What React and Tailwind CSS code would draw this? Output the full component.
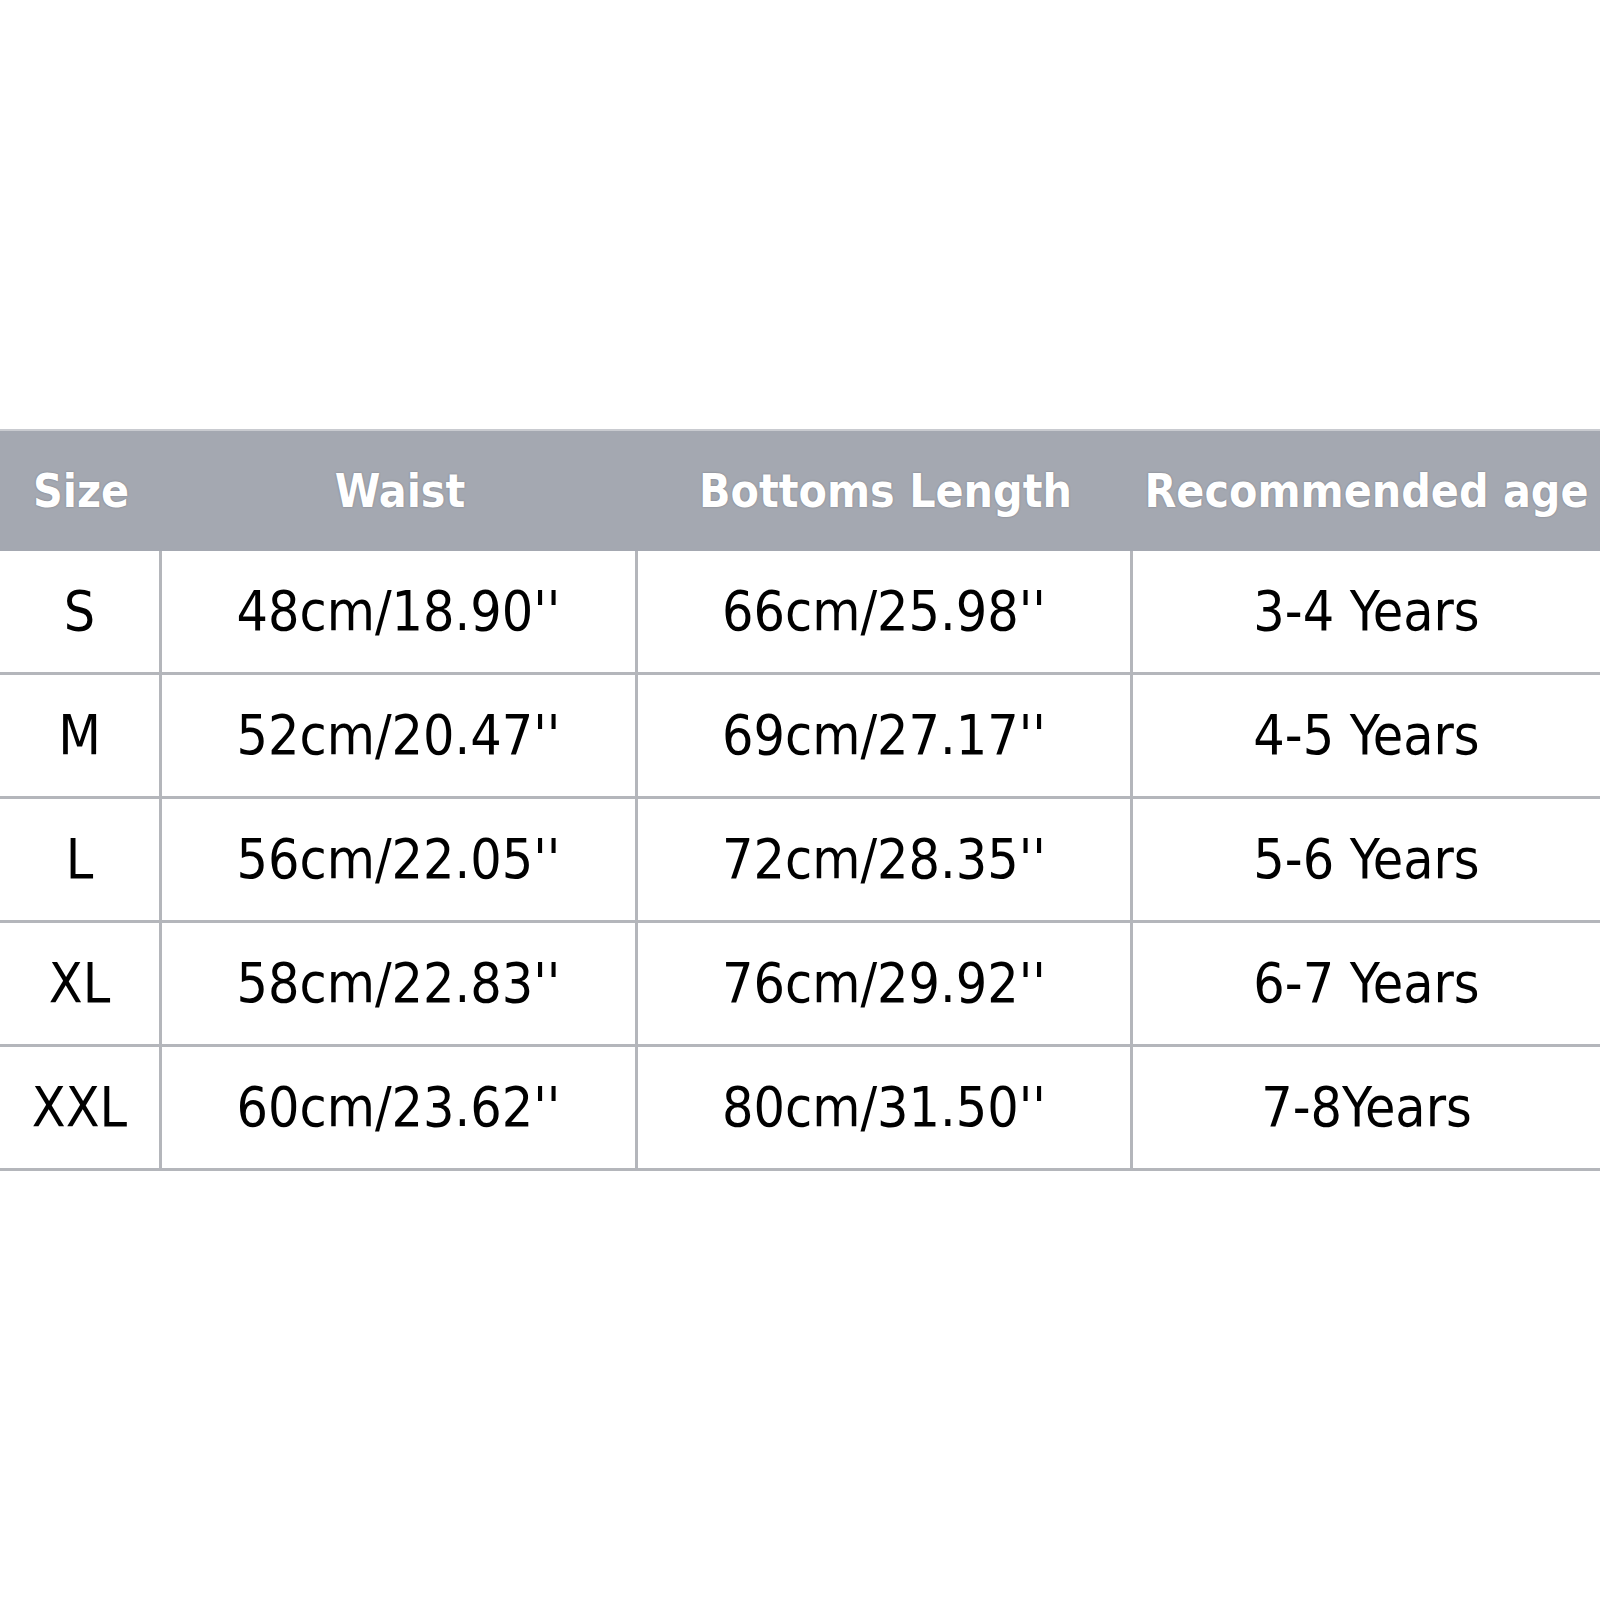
import React from 'react';

const rows = [
  ['S', "48cm/18.90''", "66cm/25.98''", '3-4 Years'],
  ['M', "52cm/20.47''", "69cm/27.17''", '4-5 Years'],
  ['L', "56cm/22.05''", "72cm/28.35''", '5-6 Years'],
  ['XL', "58cm/22.83''", "76cm/29.92''", '6-7 Years'],
  ['XXL', "60cm/23.62''", "80cm/31.50''", '7-8Years'],
];

const heads = ['Size', 'Waist', 'Bottoms Length', 'Recommended age'];

const font = { fontFamily: '"Comic Sans MS", "DejaVu Sans Condensed", "DejaVu Sans", sans-serif' };

export default function App() {
  return (
    <div className="w-[1600px] h-[1600px] bg-white pt-[429px]" style={font}>
      {/* header band */}
      <div className="grid grid-cols-[162px_476px_495px_1fr] h-[122px] bg-[#a4a8b1] border-t-2 border-[#c9cbd0]">
        {heads.map((h) => (
          <div
            key={h}
            className="flex items-center justify-center text-white font-bold text-[46px] [text-shadow:0_0_2px_rgba(60,60,70,0.45)]"
          >
            {h}
          </div>
        ))}
      </div>

      {/* body rows */}
      {rows.map((r) => (
        <div key={r[0]} className="grid grid-cols-[162px_476px_495px_1fr] h-[124px] border-b-[3px] border-[#b4b6bb]">
          {r.map((c, i) => (
            <div
              key={i}
              className={`flex items-center justify-center text-black text-[55px] ${i < 3 ? 'border-r-[3px] border-[#b4b6bb]' : ''}`}
            >
              {c}
            </div>
          ))}
        </div>
      ))}
    </div>
  );
}
